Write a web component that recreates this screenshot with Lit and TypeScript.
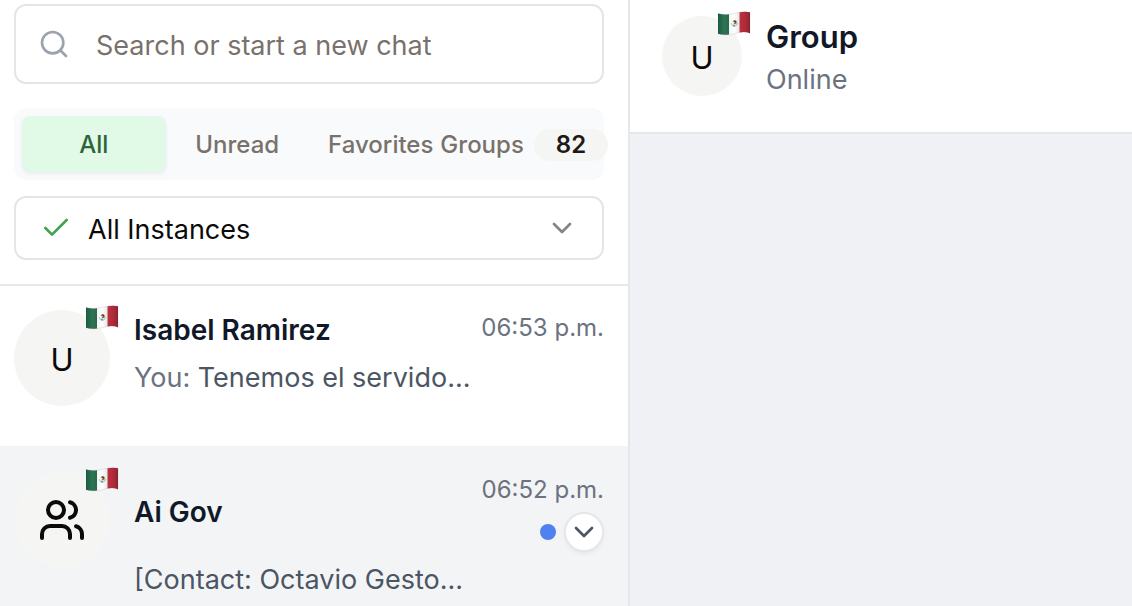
import { LitElement, html, css, svg, nothing } from "lit";
import { customElement, property } from "lit/decorators.js";

interface Chat {
  name: string;
  sender?: string;
  message: string;
  time: string;
  group?: boolean;
  unread?: boolean;
  active?: boolean;
}

const chats: Chat[] = [
  { name: "Isabel Ramirez", sender: "You:", message: "Tenemos el servido...", time: "06:53 p.m." },
  { name: "Ai Gov", message: "[Contact: Octavio Gesto...", time: "06:52 p.m.", group: true, unread: true, active: true },
];

const paths = {
  search: svg`<circle cx="11" cy="11" r="8"/><path d="m21 21-4.3-4.3"/>`,
  check: svg`<path d="M20 6 9 17l-5-5"/>`,
  chevron: svg`<path d="m6 9 6 6 6-6"/>`,
  users: svg`<path d="M16 21v-2a4 4 0 0 0-4-4H6a4 4 0 0 0-4 4v2"/><circle cx="9" cy="7" r="4"/><path d="M22 21v-2a4 4 0 0 0-3-3.87"/><path d="M16 3.13a4 4 0 0 1 0 7.75"/>`,
};

const icon = (name: keyof typeof paths, cls: string) => html`
  <svg class="icon ${cls}" viewBox="0 0 24 24" aria-hidden="true">${paths[name]}</svg>
`;

const base = css`
  * { box-sizing: border-box; }
  .icon {
    display: block;
    flex: none;
    width: 32px;
    height: 32px;
    fill: none;
    stroke: currentColor;
    stroke-width: 2;
    stroke-linecap: round;
    stroke-linejoin: round;
  }
`;

@customElement("chat-avatar")
export class ChatAvatar extends LitElement {
  @property({ type: Boolean }) group = false;

  static styles = [
    base,
    css`
      :host {
        position: relative;
        display: grid;
        place-items: center;
        flex: none;
        width: var(--avatar-size, 96px);
        height: var(--avatar-size, 96px);
        border-radius: 50%;
        background: #f5f5f4;
        color: #0c0a09;
        font-size: 31px;
        line-height: 40px;
      }
      .initial { padding-top: 3px; }
      .users { width: 48px; height: 48px; }
      .flag {
        position: absolute;
        top: -5px;
        right: -9px;
        width: 33px;
        height: 25px;
      }
    `,
  ];

  render() {
    return html`
      ${this.group ? icon("users", "users") : html`<span class="initial">U</span>`}
      <svg class="flag" viewBox="0 0 33 25" role="img" aria-label="Mexico">
        <defs>
          <linearGradient id="green"><stop offset="0" stop-color="#1b5e43"/><stop offset=".6" stop-color="#2f7454"/><stop offset="1" stop-color="#296a4c"/></linearGradient>
          <linearGradient id="white"><stop offset="0" stop-color="#f4f4f4"/><stop offset=".5" stop-color="#fff"/><stop offset="1" stop-color="#e6e6e6"/></linearGradient>
          <linearGradient id="red"><stop offset="0" stop-color="#bd3040"/><stop offset=".5" stop-color="#b02c3b"/><stop offset="1" stop-color="#8f2431"/></linearGradient>
        </defs>
        <path fill="url(#green)" d="M0 2.400Q5 4 11 3.300V23.600Q5 24.400 0 22.800Z"/>
        <path fill="url(#white)" d="M11 3.300Q17 2.400 21.500 1.200V21.400Q17 22.800 11 23.600Z"/>
        <path fill="url(#red)" d="M21.500 1.200Q27.500.1 32 1.300V22.200Q27 20.400 21.500 21.400Z"/>
        <path fill="none" stroke="#9db8b2" stroke-width="1" stroke-linecap="round" d="M13.400 12.600Q14 15.500 16.500 15.500Q19 15 19.400 12.200"/>
        <path fill="#9a7a48" d="M14.400 10.400 16.200 8.900 18.300 9.500 18.900 11.700 17.200 13.400 15.400 12.800 16.500 11.500Z"/>
        <path fill="#4b3b2c" d="M16.300 9.300 18.200 10.200 17.800 12 16.800 11Z"/>
        <circle cx="16" cy="14.400" r=".9" fill="#3da0b8"/>
        <path fill="none" stroke="#000" stroke-opacity=".15" stroke-width=".6" d="M0 2.400Q5 4 11 3.300Q17 2.400 21.500 1.200Q27.500.1 32 1.300V22.200Q27 20.400 21.500 21.400Q17 22.800 11 23.600Q5 24.400 0 22.800Z"/>
      </svg>
    `;
  }
}

@customElement("chat-row")
export class ChatRow extends LitElement {
  @property({ attribute: false }) chat!: Chat;

  static styles = [
    base,
    css`
      :host { display: block; }
      .row {
        display: flex;
        gap: 24px;
        padding: 24px 24px 24px 14px;
      }
      .row.active {
        background: #f3f4f6;
        border-top: 2px solid #f3f4f6;
      }
      .body { flex: 1; min-width: 0; padding-bottom: 24px; }
      .top { display: flex; justify-content: space-between; gap: 16px; }
      .name {
        align-self: center;
        margin: 0;
        font-size: 28px;
        line-height: 40px;
        font-weight: 600;
        color: #111827;
      }
      .meta {
        display: flex;
        flex-direction: column;
        align-items: flex-end;
        align-self: flex-start;
        gap: 4px;
      }
      .time { font-size: 24px; line-height: 36px; color: #6b7280; }
      .actions { display: flex; align-items: center; gap: 8px; }
      .dot { width: 16px; height: 16px; border-radius: 50%; background: #4f82ee; }
      .more {
        display: grid;
        place-items: center;
        width: 40px;
        height: 40px;
        padding: 0;
        border: 2px solid #e5e7eb;
        border-radius: 50%;
        background: #fff;
        color: #4b5563;
        box-shadow: 0 2px 4px rgb(0 0 0 / 0.05);
      }
      .message {
        margin: 8px 0 0;
        font-size: 27px;
        line-height: 40px;
        color: #4b5563;
        white-space: nowrap;
        overflow: hidden;
        text-overflow: ellipsis;
      }
      .sender { color: #6b7280; }
    `,
  ];

  render() {
    const c = this.chat;
    return html`
      <article class="row ${c.active ? "active" : ""}">
        <chat-avatar ?group=${c.group}></chat-avatar>
        <div class="body">
          <div class="top">
            <h2 class="name">${c.name}</h2>
            <div class="meta">
              <time class="time">${c.time}</time>
              ${c.unread
                ? html`<div class="actions">
                    <span class="dot"></span>
                    <button class="more" type="button" aria-label="Chat options">${icon("chevron", "")}</button>
                  </div>`
                : nothing}
            </div>
          </div>
          <p class="message">${c.sender ? html`<span class="sender">${c.sender}</span> ` : nothing}${c.message}</p>
        </div>
      </article>
    `;
  }
}

@customElement("app-root")
export class AppRoot extends LitElement {
  static styles = [
    base,
    css`
      :host {
        display: grid;
        grid-template-columns: minmax(0, 630px) minmax(0, 1fr);
        height: 100vh;
        overflow: hidden;
        background: #fff;
        font-family: Inter, "Liberation Sans", sans-serif;
        font-variation-settings: "opsz" 14;
        color: #0c0a09;
      }
      .sidebar { overflow: hidden; border-right: 2px solid #e5e7eb; }
      .filters {
        display: flex;
        flex-direction: column;
        padding: 4px 24px 24px 14px;
        border-bottom: 2px solid #e5e7eb;
      }
      .field {
        display: flex;
        align-items: center;
        border: 2px solid #e5e5e5;
        border-radius: 12px;
      }
      .search { height: 80px; padding: 0 22px; gap: 26px; }
      .search-icon { color: #9ca3af; }
      .input {
        flex: 1;
        min-width: 0;
        height: 100%;
        padding: 2px 0 0;
        border: 0;
        outline: 0;
        background: none;
        font: inherit;
        font-size: 27px;
      }
      .input::placeholder { color: #78716c; opacity: 1; }
      .tabs {
        display: grid;
        grid-template-columns: repeat(4, minmax(0, 1fr));
        height: 72px;
        margin: 24px 0 16px;
        padding: 8px;
        border-radius: 12px;
        background: #f9fafb;
      }
      .tab {
        display: flex;
        align-items: center;
        justify-content: center;
        gap: 10px;
        padding: 2px 0 0;
        border: 0;
        border-radius: 8px;
        background: none;
        font: inherit;
        font-size: 24px;
        font-weight: 500;
        line-height: 32px;
        color: #78716c;
      }
      .tab.on {
        background: #e1f9e7;
        color: #2c6539;
        box-shadow: 0 2px 4px rgb(0 0 0 / 0.06);
      }
      .badge {
        padding: 0 22px;
        border-radius: 16px;
        background: #f5f5f4;
        color: #1c1917;
        font-weight: 600;
      }
      .instances { position: relative; height: 64px; }
      .select {
        width: 100%;
        height: 100%;
        padding: 2px 72px 0;
        border: 0;
        border-radius: 12px;
        outline: 0;
        appearance: none;
        background: none;
        font: inherit;
        font-size: 27px;
        color: #0c0a09;
      }
      .check, .arrow { position: absolute; pointer-events: none; }
      .check { left: 24px; color: #43a34f; }
      .arrow { right: 24px; color: #858483; }
      .chat { display: flex; flex-direction: column; background: #f0f1f4; }
      .chat-header {
        display: flex;
        gap: 24px;
        padding: 16px 32px 32px;
        border-bottom: 2px solid #e5e7eb;
        background: #fff;
        --avatar-size: 80px;
      }
      .title { margin: 0; font-size: 31px; line-height: 42px; font-weight: 600; color: #111827; }
      .status { margin: 2px 0 0; font-size: 27px; line-height: 40px; color: #6b7280; }
    `,
  ];

  render() {
    return html`
      <aside class="sidebar">
        <header class="filters">
          <label class="field search">
            ${icon("search", "search-icon")}
            <input class="input" type="text" placeholder="Search or start a new chat" aria-label="Search or start a new chat" />
          </label>
          <nav class="tabs">
            <button class="tab on" type="button">All</button>
            <button class="tab" type="button">Unread</button>
            <button class="tab" type="button">Favorites</button>
            <button class="tab" type="button">Groups <span class="badge">82</span></button>
          </nav>
          <div class="field instances">
            ${icon("check", "check")}
            <select class="select" aria-label="Instances">
              <option>All Instances</option>
            </select>
            ${icon("chevron", "arrow")}
          </div>
        </header>
        ${chats.map((c) => html`<chat-row .chat=${c}></chat-row>`)}
      </aside>
      <main class="chat">
        <header class="chat-header">
          <chat-avatar></chat-avatar>
          <div>
            <h1 class="title">Group</h1>
            <p class="status">Online</p>
          </div>
        </header>
      </main>
    `;
  }
}
